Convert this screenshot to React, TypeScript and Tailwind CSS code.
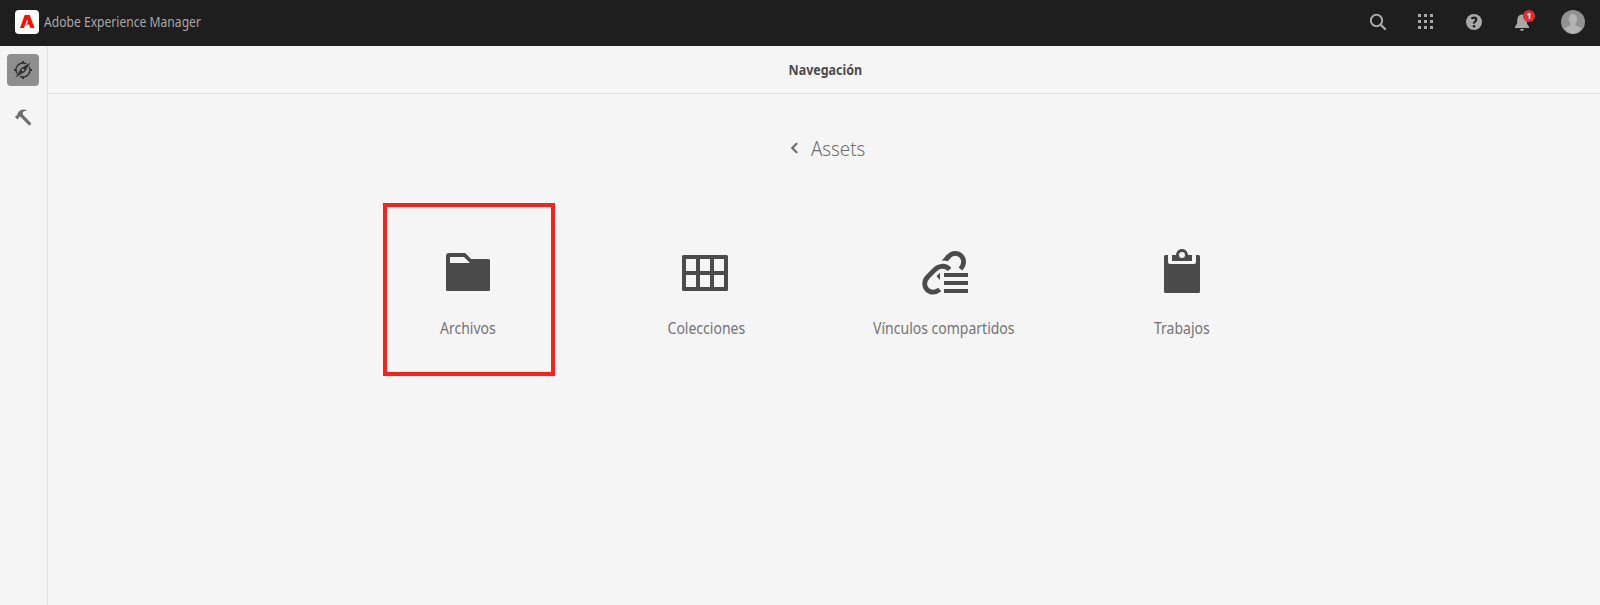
const tiles = [
  {
    label: 'Archivos',
    frame: 'relative left-px border-[#ff1e1a] pr-[2px]',
    icon: (
      <svg className="shrink-0" width="48" height="48" viewBox="0 0 48 48" fill="#4b4b4b">
        <path fillRule="evenodd" d="M5 5h15.500a2 2 0 0 1 1.500.7L27 11h17.500a1.500 1.500 0 0 1 1.500 1.500v29a1.500 1.500 0 0 1-1.500 1.500h-41a1.500 1.500 0 0 1-1.500-1.500V8a3 3 0 0 1 3-3zM6 9v6h20l-6-6z" />
      </svg>
    ),
  },
  {
    label: 'Colecciones',
    frame: 'border-transparent',
    icon: (
      <svg width="48" height="48" viewBox="1 0 48 48" fill="#4b4b4b">
        <path fillRule="evenodd" d="M2.500 7h43a1.500 1.500 0 0 1 1.500 1.500v33a1.500 1.500 0 0 1-1.500 1.500h-43a1.500 1.500 0 0 1-1.500-1.500v-33a1.500 1.500 0 0 1 1.500-1.500zM5 11v12h10V11zM19 11v12h10V11zM33 11v12h10V11zM5 27v12h10V27zM19 27v12h10V27zM33 27v12h10V27z" />
      </svg>
    ),
  },
  {
    label: 'Vínculos compartidos',
    frame: 'border-transparent',
    icon: (
      <svg width="48" height="48" viewBox="0 0 48 48" fill="none" stroke="#4b4b4b" strokeWidth="4.800">
        <path d="M21.500 12.700L27 6.700Q28.500 8 30.500 10L27.800 13.200Q24.500 12.100 21.500 12.700z" fill="#4b4b4b" stroke="none" />
        <path d="M28 9 C30 7 32 5.400 35 5.400 C40 5.400 43.600 9.200 43.600 14 Q43.600 17.500 40.500 21" />
        <path d="M29.600 21.500 C27 18.500 24 18.100 21.500 18.300 C18.500 18.500 16.500 20 14.500 22 L8 28.500 C5.800 30.700 4.700 33 4.700 35.800 C4.700 40.500 8.500 44.200 13 44.200 Q16.500 44.200 19.700 41.500" />
        <path d="M20 24.700 L16.500 28.300 L20 32z" fill="#4b4b4b" stroke="none" />
        <path d="M24 27h24M24 35h24M24 43h24" strokeWidth="4" />
      </svg>
    ),
  },
  {
    label: 'Trabajos',
    frame: 'border-transparent',
    icon: (
      <svg width="48" height="48" viewBox="0 0 48 48" fill="#4b4b4b">
        <path d="M7.500 7H10v7a2 2 0 0 0 2 2h24a2 2 0 0 0 2-2V7h2.500A1.500 1.500 0 0 1 42 8.500v35a1.500 1.500 0 0 1-1.500 1.500h-33A1.500 1.500 0 0 1 6 43.500v-35A1.500 1.500 0 0 1 7.500 7z" />
        <path fillRule="evenodd" d="M14 7h4c.5-4 3-6 6-6s5.500 2 6 6h4v6H14zM24 4a3 3 0 1 0 0 6a3 3 0 0 0 0-6z" />
      </svg>
    ),
  },
];

function Header() {
  return (
    <header className="flex h-[46px] shrink-0 items-center bg-[#1e1e1e] pb-[2px] pl-[15px] pr-[15px] text-[#a8a8a8]">
      <svg width="24" height="24" viewBox="0 0 24 24">
        <rect width="24" height="24" rx="4" fill="#fff" />
        <path fill="#fa0f00" d="M9.700 5h5L19.500 18h-4l-1.500-3.500h-3.200L13 12.500 12 9.500 9 18H5z" />
      </svg>
      <h1 className="ml-[5px] mb-px origin-left scale-x-[0.865] text-[14px] leading-5 whitespace-nowrap">Adobe Experience Manager</h1>
      <nav className="ml-auto flex items-center">
        <svg width="18" height="18" viewBox="0 0 18 18" fill="none" stroke="#a8a8a8">
          <circle cx="7.500" cy="7.500" r="5.700" strokeWidth="2" />
          <path d="m11.500 11.500 4.500 4.500" strokeWidth="2.400" strokeLinecap="round" />
        </svg>
        <svg className="ml-[30px]" width="18" height="18" viewBox="0 0 18 18" fill="#a8a8a8">
          <path d="M1 1h3v3H1zM7 1h3v3H7zM13 1h3v3h-3zM1 7h3v3H1zM7 7h3v3H7zM13 7h3v3h-3zM1 13h3v3H1zM7 13h3v3H7zM13 13h3v3h-3z" />
        </svg>
        <svg className="ml-[30px]" width="18" height="18" viewBox="0 0 18 18">
          <circle cx="9" cy="9" r="8" fill="#a8a8a8" />
          <path d="M6.300 5.800Q7.500 4.600 9 4.600q2.300 0 2.300 2 0 1.200-1.200 2T9 10.700" fill="none" stroke="#1e1e1e" strokeWidth="2.100" />
          <circle cx="9" cy="13.300" r="1.300" fill="#1e1e1e" />
        </svg>
        <div className="relative ml-[30px] h-[18px] w-[18px]">
          <svg width="18" height="18" viewBox="0 0 18 18" fill="#a8a8a8">
            <path d="M9 1.500c-3 0-4.700 2.500-4.700 5.500 0 4-1 5-2.300 6.500V15h14v-1.500C14.700 12 13.700 11 13.700 7c0-3-1.700-5.500-4.700-5.500zM7 16h4q-.4 2-2 2t-2-2z" />
          </svg>
          <span className="absolute left-[10px] top-[-3px] flex h-3 w-3 items-center justify-center rounded-full bg-[#e32b30] text-[9px] leading-3 font-bold text-white">1</span>
        </div>
        <svg className="ml-[30px]" width="24" height="24" viewBox="0 0 24 24">
          <circle cx="12" cy="12" r="12" fill="#919191" />
          <path fill="#b4b4b4" d="M12 4c2.800 0 4.200 2 4.200 4.500 0 2-.8 3.500-1.700 4.500v2.500c2 .8 4.500 1.500 5.800 3A12 12 0 0 1 12 24a12 12 0 0 1-8.300-5.500c1.300-1.500 3.800-2.200 5.800-3V13c-.9-1-1.700-2.500-1.700-4.500C7.800 6 9.200 4 12 4z" />
        </svg>
      </nav>
    </header>
  );
}

function Sidebar() {
  return (
    <aside className="flex w-12 shrink-0 flex-col gap-4 border-r border-[#e1e1e1] pl-[7px] pt-2">
      <button className="flex h-8 w-8 items-center justify-center rounded-[4px] bg-[#8e8e8e]">
        <svg width="18" height="18" viewBox="0 0 18 18">
          <circle cx="9" cy="9" r="7" fill="none" stroke="#323232" strokeWidth="1.500" />
          <path stroke="#323232" strokeWidth="1.800" d="M9 0v2M9 16v2M0 9h2M16 9h2" />
          <path d="M16.500 1.500 2 16.500" stroke="#8e8e8e" strokeWidth="4" />
          <path fill="#323232" fillRule="evenodd" d="M16.500 1.500 7 7.300 1.500 16.500 11 10.700zM9 7.700a1.300 1.300 0 1 1 0 2.600a1.300 1.300 0 0 1 0-2.600z" />
        </svg>
      </button>
      <button className="flex h-8 w-8 items-center justify-center">
        <svg width="18" height="18" viewBox="0 0 18 18" fill="#6e6e6e">
          <path d="M.8 7.700 2.200 6.800Q3.300 6.500 3.400 5.200 3.800 3.500 6 1.600 8.500-.1 12.300.9q.8.500 0 .9Q9.300 2 8.700 3.700L8.800 5.500 17.400 14.500 15.400 16.700 6.700 8 5.600 7.600 5 8.200Q5 9.600 3.200 10.300z" />
        </svg>
      </button>
    </aside>
  );
}

export default function App() {
  return (
    <div className="flex h-[605px] w-full flex-col overflow-hidden bg-[#f5f5f5] font-['Noto_Sans',sans-serif]">
      <Header />
      <div className="flex min-h-0 flex-1">
        <Sidebar />
        <main className="flex flex-1 flex-col">
          <div className="flex h-12 items-center justify-center border-b border-[#e1e1e1] pb-px pl-[2px] text-[14px] font-bold text-[#4b4b4b]">
            <h2 className="scale-x-[0.89]">Navegación</h2>
          </div>
          <div className="mt-[38px] flex h-8 items-center justify-center gap-[13px] pl-[13px]">
            <svg width="8" height="12" viewBox="0 0 8 12" fill="none" stroke="#6e6e6e" strokeWidth="2.200">
              <path d="M6.500 1.800 2.300 6l4.200 4.200" strokeLinecap="round" />
            </svg>
            <h3 className="origin-left scale-x-[0.91] text-[20.500px] font-light text-[#6e6e6e]">Assets</h3>
          </div>
          <div className="mt-[39px] ml-[301px] grid w-[952px] grid-cols-4">
            {tiles.map((tile) => (
              <div key={tile.label} className="flex justify-center">
                <div className={`flex h-[173px] w-[172px] flex-col items-center border-4 pt-[41px] ${tile.frame}`}>
                  {tile.icon}
                  <span className="mt-[20px] scale-x-[0.875] text-[16px] leading-6 whitespace-nowrap text-[#747474]">{tile.label}</span>
                </div>
              </div>
            ))}
          </div>
        </main>
      </div>
    </div>
  );
}
